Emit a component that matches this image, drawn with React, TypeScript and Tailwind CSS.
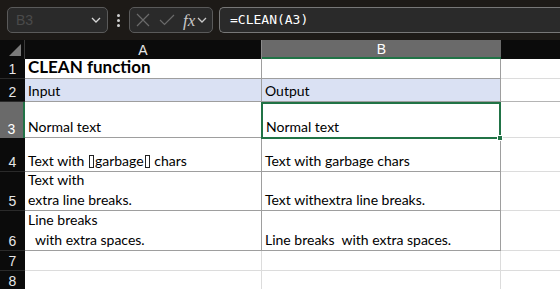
import React from "react";

const G = "border-[#9e9e9e]";
const L = "border-[#dcdcdc]";

type Row = {
  h: string;
  a: React.ReactNode;
  b: React.ReactNode;
  bg?: string;
  aB: string;
  bB: string;
  cB: string;
};

function Junk() {
  return <span className="inline-block w-[5px] h-[13px] border border-[#222] align-[-2px] mx-[1px]" />;
}

const rows: Row[] = [
  { h: "h-[20px]", a: <span className="font-bold text-[17px]">CLEAN function</span>, b: null, aB: G, bB: G, cB: L },
  { h: "h-[23px]", a: "Input", b: "Output", bg: "bg-[#dae1f3]", aB: G, bB: G, cB: "border-[#b4b4b4]" },
  { h: "h-[36px]", a: "Normal text", b: "Normal text", aB: G, bB: G, cB: L },
  {
    h: "h-[34px]",
    a: (
      <>
        Text with <Junk />garbage<Junk /> chars
      </>
    ),
    b: "Text with garbage chars",
    aB: G, bB: G, cB: L,
  },
  {
    h: "h-[39px]",
    a: (
      <>
        Text with
        <br />
        extra line breaks.
      </>
    ),
    b: "Text withextra line breaks.",
    aB: G, bB: G, cB: L,
  },
  {
    h: "h-[40px]",
    a: (
      <>
        Line breaks
        <br />
        {"\u00a0\u00a0with extra spaces."}
      </>
    ),
    b: "Line breaks\u00a0 with extra spaces.",
    aB: G, bB: G, cB: L,
  },
  { h: "h-[20px]", a: null, b: null, aB: L, bB: L, cB: L },
  { h: "h-[20px]", a: null, b: null, aB: L, bB: L, cB: L },
];

function Chevron({ className }: { className?: string }) {
  return (
    <svg width="10" height="6" viewBox="0 0 10 6" className={className}>
      <path d="M1 1l4 4 4-4" fill="none" stroke="currentColor" strokeWidth="1.3" />
    </svg>
  );
}

export default function App() {
  return (
    <div className="w-[560px] h-[289px] overflow-hidden bg-white font-['Lato',sans-serif] text-[14px] text-black">
      {/* formula bar */}
      <div className="h-[40px] bg-[#1d1a17] flex items-center pl-[7px] gap-[6px]">
        <div className="w-[101px] h-[26px] rounded-[5px] border border-[#5a5a5a] bg-[#2a2a2a] flex items-center justify-between pl-[8px] pr-[6px]">
          <span className="text-[#4a4a4a] text-[14px] font-['Liberation_Sans',sans-serif]">B3</span>
          <Chevron className="text-[#d6d6d6]" />
        </div>
        <div className="flex flex-col gap-[2px] px-[3px]">
          <span className="w-[3px] h-[3px] bg-[#d0d0d0] rounded-full" />
          <span className="w-[3px] h-[3px] bg-[#d0d0d0] rounded-full" />
          <span className="w-[3px] h-[3px] bg-[#d0d0d0] rounded-full" />
        </div>
        <div className="w-[84px] h-[26px] rounded-[5px] border border-[#5a5a5a] bg-[#2a2a2a] flex items-center pl-[6px] pr-[4px]">
          <svg width="14" height="14" viewBox="0 0 14 14" className="text-[#6a6a6a]">
            <path d="M1 1l12 12M13 1L1 13" stroke="currentColor" strokeWidth="1.2" />
          </svg>
          <svg width="16" height="12" viewBox="0 0 16 12" className="ml-[9px] text-[#6a6a6a]">
            <path d="M1 6l4.5 4.5L15 1" fill="none" stroke="currentColor" strokeWidth="1.2" />
          </svg>
          <span className="ml-[8px] text-[#c8c8c8] italic font-['Liberation_Serif',serif] text-[17px] leading-none">fx</span>
          <Chevron className="ml-[2px] text-[#c8c8c8]" />
        </div>
        <div className="flex-1 h-[26px] rounded-l-[5px] border border-r-0 border-[#777] bg-[#2a2a2a] flex items-center pl-[10px]">
          <span className="text-white text-[13px] font-['DejaVu_Sans_Mono',monospace]">=CLEAN(A3)</span>
        </div>
      </div>

      {/* grid */}
      <div className="grid grid-cols-[25px_237px_239px_1fr]">
        {/* column headers */}
        <div className="h-[19px] bg-[#0b0b0b] border-r border-[#3a3a3a] relative">
          <svg width="12" height="12" viewBox="0 0 12 12" className="absolute right-[3px] bottom-[3px]">
            <path d="M12 0L12 12L0 12Z" fill="#7a7a7a" />
          </svg>
        </div>
        <div className="h-[19px] bg-[#0b0b0b] border-r border-[#8a8a8a] flex items-center justify-center leading-none text-[#e6e6e6] text-[14px] font-['Liberation_Sans',sans-serif]">
          A
        </div>
        <div className="h-[19px] bg-[#6a6a6a] border-b-2 border-[#217346] flex items-center justify-center leading-none text-white text-[14px] font-['Liberation_Sans',sans-serif]">
          B
        </div>
        <div className="h-[19px] bg-[#0b0b0b]" />

        {rows.map((r, i) => {
          const n = i + 1;
          const sel = n === 3;
          return (
            <React.Fragment key={n}>
              <div
                className={`${r.h} flex items-end justify-center pb-[2px] leading-none text-[14px] font-['Liberation_Sans',sans-serif] ${
                  sel
                    ? "bg-[#6a6a6a] text-white border-r-2 border-[#217346]"
                    : "bg-[#0b0b0b] text-[#e6e6e6] border-b border-[#2a2a2a]"
                }`}
              >
                {n}
              </div>
              <div className={`${r.h} ${r.bg ?? ""} border-r border-b ${r.aB} flex items-end pl-[3px] leading-[20px] whitespace-nowrap`}>
                <div>{r.a}</div>
              </div>
              <div
                className={`${sel ? "h-[37px] -mb-px -ml-px border-2 border-[#217346] relative" : `${r.h} border-r border-b ${r.bB}`} ${
                  r.bg ?? ""
                } flex items-end pl-[3px] leading-[20px] whitespace-nowrap`}
              >
                <div>{r.b}</div>
                {sel && <span className="absolute right-[-4px] bottom-[-4px] w-[6px] h-[6px] bg-[#217346] border border-white" />}
              </div>
              <div className={`${r.h} border-b ${r.cB}`} />
            </React.Fragment>
          );
        })}
      </div>
    </div>
  );
}
